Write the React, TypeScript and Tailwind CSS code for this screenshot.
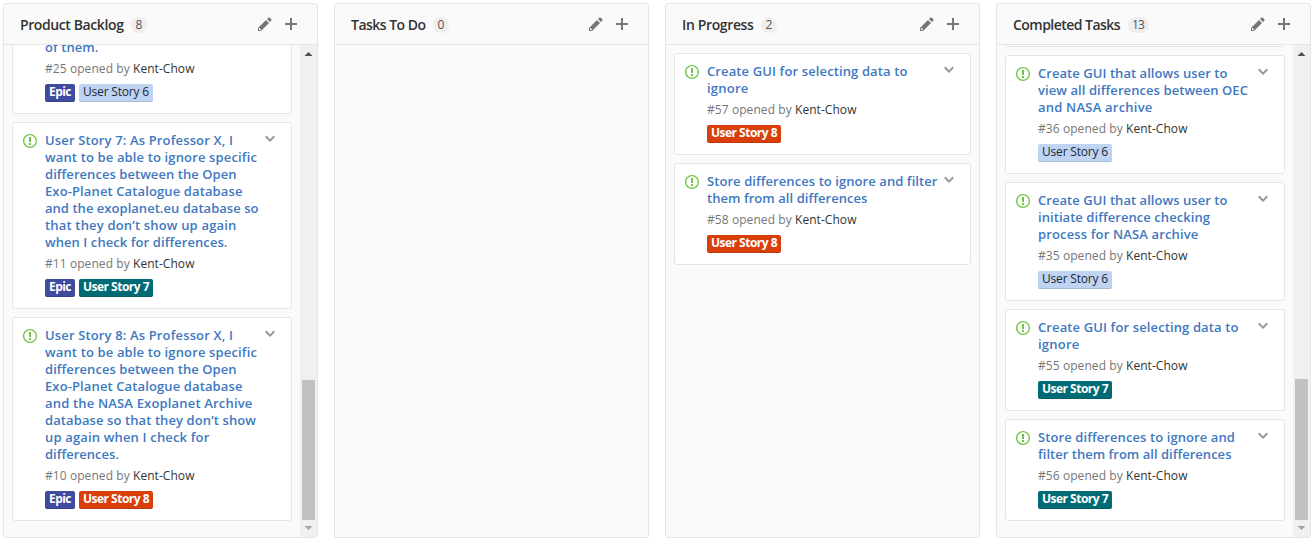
import { useLayoutEffect, useRef, useState } from "react";

type Line = [text: string, width: number];
type LabelKind = "epic" | "story6" | "story7" | "story8";
interface Issue {
  id: number;
  title: Line[];
  labels: LabelKind[];
  /** The top of the card is scrolled out of the column. */
  scrolled?: boolean;
}
interface BoardColumn {
  name: Line;
  count: number;
  scroll: boolean;
  /** A card whose lower edge alone is still in view precedes the issues. */
  edge?: boolean;
  issues: Issue[];
}

const LABELS: Record<LabelKind, { text: string; width: number; style: string }> = {
  epic: { text: "Epic", width: 22, style: "bg-[#3e4b9e] text-white font-bold" },
  story6: { text: "User Story 6", width: 66, style: "bg-[#bfd4f2] text-[#202833] font-medium" },
  story7: { text: "User Story 7", width: 66, style: "bg-[#006b75] text-white font-bold" },
  story8: { text: "User Story 8", width: 66, style: "bg-[#d93f0b] text-white font-bold" },
};

const COLUMNS: BoardColumn[] = [
  {
    name: ["Product Backlog", 103.5],
    count: 8,
    scroll: true,
    issues: [
      { id: 25, title: [["of them.", 53.5]], labels: ["epic", "story6"], scrolled: true },
      {
        id: 11,
        title: [
          ["User Story 7: As Professor X, I", 188],
          ["want to be able to ignore specific", 212],
          ["differences between the Open", 191.5],
          ["Exo-Planet Catalogue database", 197.5],
          ["and the exoplanet.eu database so", 213.5],
          ["that they don’t show up again", 191.5],
          ["when I check for differences.", 182.5],
        ],
        labels: ["epic", "story7"],
      },
      {
        id: 10,
        title: [
          ["User Story 8: As Professor X, I", 188],
          ["want to be able to ignore specific", 212],
          ["differences between the Open", 191.5],
          ["Exo-Planet Catalogue database", 197.5],
          ["and the NASA Exoplanet Archive", 207.5],
          ["database so that they don’t show", 211],
          ["up again when I check for", 164.5],
          ["differences.", 74],
        ],
        labels: ["epic", "story8"],
      },
    ],
  },
  { name: ["Tasks To Do", 74.5], count: 0, scroll: false, issues: [] },
  {
    name: ["In Progress", 71.5],
    count: 2,
    scroll: false,
    issues: [
      { id: 57, title: [["Create GUI for selecting data to", 200.5], ["ignore", 41.5]], labels: ["story8"] },
      { id: 58, title: [["Store differences to ignore and filter", 230.5], ["them from all differences", 160.5]], labels: ["story8"] },
    ],
  },
  {
    name: ["Completed Tasks", 107],
    count: 13,
    scroll: true,
    edge: true,
    issues: [
      {
        id: 36,
        title: [["Create GUI that allows user to", 189.5], ["view all differences between OEC", 210], ["and NASA archive", 114.5]],
        labels: ["story6"],
      },
      {
        id: 35,
        title: [["Create GUI that allows user to", 189.5], ["initiate difference checking", 172], ["process for NASA archive", 160.5]],
        labels: ["story6"],
      },
      { id: 55, title: [["Create GUI for selecting data to", 200.5], ["ignore", 41.5]], labels: ["story7"] },
      { id: 56, title: [["Store differences to ignore and", 197], ["filter them from all differences", 193.5]], labels: ["story7"] },
    ],
  },
];

/** One line of text whose tracking is adjusted so that it sets to the given width. */
function Fit({ text, width, className = "" }: { text: string; width: number; className?: string }) {
  const ref = useRef<HTMLSpanElement>(null);
  const [tracking, setTracking] = useState(0);
  useLayoutEffect(() => {
    if (ref.current) {
      const natural = ref.current.getBoundingClientRect().width - tracking * text.length;
      setTracking((width - natural) / text.length);
    }
  }, []);
  return (
    <span ref={ref} className={`inline-block whitespace-pre ${className}`} style={{ letterSpacing: `${tracking}px` }}>
      {text}
    </span>
  );
}

function Icon({ w, d, className = "" }: { w: number; d: string; className?: string }) {
  return (
    <svg width={w} height={16} viewBox={`0 0 ${w} 16`} className={`shrink-0 fill-current ${className}`}>
      <path fillRule="evenodd" d={d} />
    </svg>
  );
}

const PENCIL =
  "M0 12v3h3l8-8-3-3-8 8zm3 2H1v-2h1v1h1v1zm10.3-9.3L12 6 9 3l1.3-1.3a.996.996 0 0 1 1.41 0l1.59 1.59c.39.39.39 1.02 0 1.41z";
const PLUS = "M12 9H7v5H5V9H0V7h5V2h2v5h5z";
const CHEVRON = "M5 11L0 6l1.5-1.5L5 8.25 8.5 4.5 10 6z";
const ISSUE_OPENED =
  "M7 2.3c3.14 0 5.7 2.56 5.7 5.7s-2.56 5.7-5.7 5.7A5.71 5.71 0 0 1 1.3 8c0-3.14 2.56-5.7 5.7-5.7zM7 1C3.14 1 0 4.14 0 8s3.14 7 7 7 7-3.14 7-7-3.14-7-7-7zm1 3H6v5h2V4zm0 6H6v2h2v-2z";

function Card({ issue }: { issue: Issue }) {
  return (
    <article className="flex shrink-0 items-start rounded-[3px] border border-[#e5e5e5] bg-white pt-[9px] pb-[11px] pl-2.5">
      <Icon w={14} d={ISSUE_OPENED} className="mt-px text-[#6cc644]" />
      <div className="ml-2 w-0 grow">
        <h4
          className={`flex flex-col items-start text-[13px] leading-[17px] font-semibold text-[#4078c0] ${issue.scrolled ? "pt-17" : ""}`}
        >
          {issue.title.map(([text, width]) => (
            <Fit key={text} text={text} width={width} />
          ))}
        </h4>
        <p className="mt-[5px] flex text-[12px] leading-4 text-[#767676]">
          <Fit text={`#${issue.id} opened by `} width={88} />
          <Fit text="Kent-Chow" width={61.5} className="text-[#333]" />
        </p>
        <div className="mt-[7px] flex gap-1">
          {issue.labels.map((kind) => (
            <span
              key={kind}
              className={`flex h-[18px] rounded-xs px-1 text-[12px] leading-4 shadow-[inset_0_-1px_0_rgba(0,0,0,0.12)] ${LABELS[kind].style}`}
            >
              <Fit text={LABELS[kind].text} width={LABELS[kind].width} />
            </span>
          ))}
        </div>
      </div>
      <Icon w={10} d={CHEVRON} className="-mt-px mr-4 text-[#999]" />
    </article>
  );
}

function Scrollbar({ thumb }: { thumb: string }) {
  return (
    <div className="flex w-[17px] shrink-0 flex-col items-center bg-[#f0f0f0]">
      <svg width={17} height={17} viewBox="0 0 17 17" className="fill-[#505050]">
        <path d="M8.5 7L12.5 11H4.5z" />
      </svg>
      <div className="grow" />
      <div className={`w-[13px] bg-[#c1c1c1] ${thumb}`} />
      <svg width={17} height={17} viewBox="0 0 17 17" className="fill-[#a3a3a3]">
        <path d="M4.5 6H12.5L8.5 10z" />
      </svg>
    </div>
  );
}

function Column({ column }: { column: BoardColumn }) {
  return (
    <section className="flex h-[535px] w-[315px] shrink-0 flex-col overflow-hidden rounded-[3px] border border-[#e5e5e5] bg-[#fafafa]">
      <header className="flex h-[41px] shrink-0 items-center border-b border-[#e5e5e5] pr-5 pl-4">
        <h3 className="flex pt-0.5 text-[14px] leading-5 font-semibold text-[#333]">
          <Fit text={column.name[0]} width={column.name[1]} />
        </h3>
        <span className="mt-0.5 ml-[7.5px] flex h-4 items-center rounded-full bg-[#eee] px-[4.5px] text-[12px] leading-4 text-[#555]">
          <Fit text={String(column.count)} width={column.count > 9 ? 12 : 7} />
        </span>
        <Icon w={14} d={PENCIL} className="mr-[13px] ml-auto text-[#767676]" />
        <Icon w={12} d={PLUS} className="text-[#767676]" />
      </header>
      <div className="flex min-h-0 grow">
        <div
          className={`flex min-h-0 grow flex-col gap-2 overflow-hidden px-2 ${column.scroll ? "justify-end pb-4" : "pt-2"}`}
        >
          {column.edge && <div className="h-10 shrink-0 rounded-[3px] border border-[#e5e5e5] bg-white" />}
          {column.issues.map((issue) => (
            <Card key={issue.id} issue={issue} />
          ))}
        </div>
        {column.scroll && <Scrollbar thumb={column.edge ? "h-[141px]" : "h-[140px]"} />}
      </div>
    </section>
  );
}

export default function App() {
  return (
    <main className="flex h-[542px] w-[1316px] gap-4 overflow-hidden bg-white pt-[3px] pl-[3px] font-['Open_Sans','Noto_Sans',sans-serif]">
      {COLUMNS.map((column) => (
        <Column key={column.name[0]} column={column} />
      ))}
    </main>
  );
}
